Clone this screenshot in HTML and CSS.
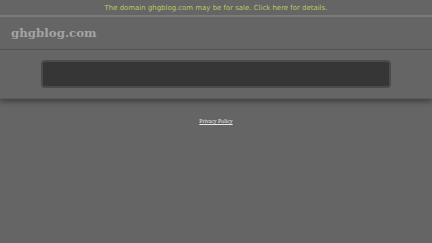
FILE: index.html
```html
<!DOCTYPE html>
<html>
<head>
<meta charset="utf-8">
<link rel="stylesheet" href="styles.css">
</head>
<body>
<div class="topbar"><a class="sale" href="#">The domain ghgblog.com may be for sale. Click here for details.</a></div>
<div class="header"><span class="logo">ghgblog.com</span></div>
<div class="search"><div class="box"></div></div>
<div class="footer"><a class="privacy" href="#">Privacy Policy</a></div>
</body>
</html>
```
FILE: styles.css
```css
html, body { margin: 0; padding: 0; }
body { background: #656565; width: 432px; height: 243px; overflow: hidden; }
.topbar {
  height: 15px;
  border-bottom: 2px solid #7b7b7b;
  display: flex; justify-content: center; align-items: center;
}
.sale {
  font-family: "DejaVu Sans", sans-serif;
  font-size: 6.95px;
  color: #b8c565;
  text-decoration: none;
  padding-top: 1px;
}
.header {
  height: 32px;
  border-bottom: 1px solid #575757;
  display: flex; align-items: center;
  padding-left: 11px;
}
.logo {
  font-family: "DejaVu Serif", serif;
  font-weight: bold;
  font-size: 11.8px;
  color: #a3a3a3;
}
.search {
  height: 48px;
  display: flex; align-items: center; justify-content: center;
  box-shadow: 0 3px 5px rgba(0,0,0,0.35);
  border-bottom: 1px solid #5c5c5c;
}
.box {
  width: 346px; height: 24px;
  background: #363636;
  border: 2px solid #4b4b4b;
  border-radius: 4px;
  margin-left: -1px;
}
.footer { display: flex; justify-content: center; padding-top: 19px; }
.privacy {
  font-family: "Liberation Serif", serif;
  font-size: 5.7px;
  color: #e8e8e8;
}
```
